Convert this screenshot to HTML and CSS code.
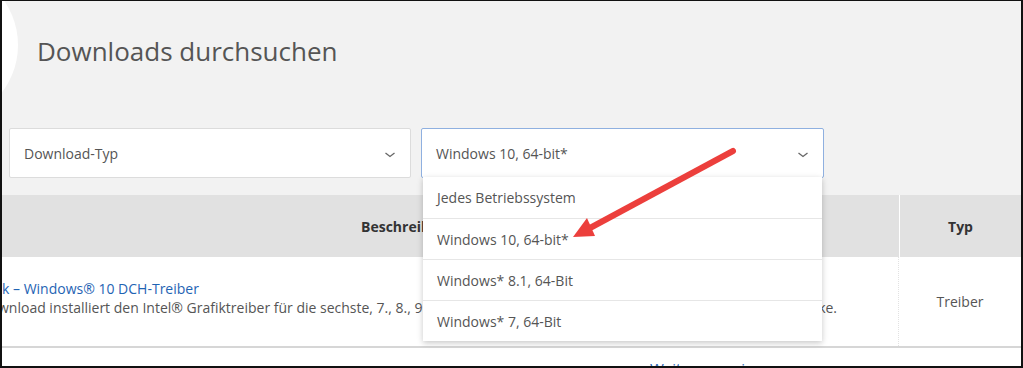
FILE: index.html
```html
<!DOCTYPE html>
<html>
  <head>
    <title>Downloads durchsuchen</title>
    <link rel="stylesheet" href="styles.css">
  </head>
  <body>
    <div class="frame">
      <div class="hero">
        <div class="bubble"></div>
        <h1>Downloads durchsuchen</h1>

        <div class="filters">
          <div class="select">
            <span>Download-Typ</span>
            <svg class="chev" width="12" height="6" viewBox="0 0 12 6"><polyline points="1.5,1 6,4.5 10.5,1" fill="none" stroke="#666" stroke-width="1.3"/></svg>
          </div>
          <div class="select open">
            <span>Windows 10, 64-bit*</span>
            <svg class="chev" width="12" height="6" viewBox="0 0 12 6"><polyline points="1.5,1 6,4.5 10.5,1" fill="none" stroke="#666" stroke-width="1.3"/></svg>
            <ul class="menu">
              <li>Jedes Betriebssystem</li>
              <li>Windows 10, 64-bit*</li>
              <li>Windows* 8.1, 64-Bit</li>
              <li>Windows* 7, 64-Bit</li>
            </ul>
          </div>
        </div>
      </div>

      <div class="table">
        <div class="thead">
          <div class="th th-desc">Beschreibung</div>
          <div class="th th-type">Typ</div>
        </div>
        <div class="row">
          <div class="td td-desc">
            <a href="#" class="title">k – Windows® 10 DCH-Treiber</a>
            <p class="desc">wnload installiert den Intel® Grafiktreiber für die sechste, 7., 8., 9. Generation Intel® Core™ Prozessoren sowie Pentium® Marke.</p>
          </div>
          <div class="td td-type">Treiber</div>
        </div>
        <div class="more"><a href="#">Weitere anzeigen</a></div>
      </div>

      <!-- red annotation arrow -->
      <svg class="arrow" width="1019" height="367" viewBox="0 0 1019 367">
        <line x1="731" y1="150" x2="588" y2="227" stroke="#ec3f3c" stroke-width="6" stroke-linecap="round"/>
        <polygon points="571,236 585,217 593,235" fill="#ec3f3c"/>
      </svg>
    </div>
  </body>
</html>
```

FILE: styles.css
```css
html,
body {
  margin: 0;
  padding: 0;
}
body {
  font-family: "Open Sans", "Noto Sans", sans-serif;
  color: #555;
}
.frame {
  position: relative;
  width: 1023px;
  height: 368px;
  box-sizing: border-box;
  border: 2px solid #111;
  border-top-width: 1px;
  overflow: hidden;
  background: #fff;
}
.hero {
  position: relative;
  background: #f2f2f2;
  height: 194px;
  box-sizing: border-box;
  padding-top: 34px;
}
.bubble {
  position: absolute;
  left: -140px;
  top: -34px;
  width: 156px;
  height: 156px;
  border-radius: 50%;
  background: #fff;
}
h1 {
  position: relative;
  margin: 0 0 61px 35px;
  font-size: 26px;
  line-height: 32px;
  font-weight: 400;
  color: #555;
}
.filters {
  display: flex;
  gap: 10px;
  padding-left: 7px;
}
.select {
  position: relative;
  display: flex;
  align-items: center;
  justify-content: space-between;
  width: 402px;
  height: 50px;
  box-sizing: border-box;
  padding: 0 14px 0 14px;
  background: #fff;
  border: 1px solid #dcdcdc;
  border-radius: 2px;
  font-size: 14px;
  color: #555;
}
.select.open {
  width: 403px;
  border-color: #8fb0e0;
}
.chev {
  margin-top: 3px;
}
.menu {
  position: absolute;
  top: 100%;
  left: 1px;
  right: 1px;
  margin: 0;
  padding: 0;
  list-style: none;
  background: #fff;
  box-shadow: 0 2px 6px rgba(0, 0, 0, 0.22);
  z-index: 2;
}
.menu li {
  height: 41px;
  box-sizing: border-box;
  padding: 0 14px;
  display: flex;
  align-items: center;
  border-top: 1px solid #e6e6e6;
  font-size: 14px;
  color: #555;
}
.menu li:first-child {
  border-top: none;
  height: 41px;
  align-items: flex-start;
  padding-top: 11px;
}
.thead {
  display: grid;
  grid-template-columns: 897px 1fr;
  column-gap: 1px;
  background: #fff;
  height: 62px;
}
.th {
  background: #e1e1e1;
  display: flex;
  align-items: center;
  font-size: 14px;
  font-weight: 700;
  color: #333;
}
.th-desc {
  padding-left: 359px;
}
.th-type {
  justify-content: center;
}
.row {
  display: grid;
  grid-template-columns: 897px 1fr;
  height: 91px;
  box-sizing: border-box;
  border-bottom: 2px solid #d6d6d6;
}
.td-desc {
  padding-top: 22px;
  border-right: 1px dotted #e2e2e2;
  overflow: hidden;
}
.title {
  display: block;
  color: #1f64b4;
  text-decoration: none;
  font-size: 14px;
  line-height: 19px;
}
.desc {
  margin: 0 0 0 -4px;
  font-size: 14px;
  line-height: 19px;
  white-space: nowrap;
  color: #555;
}
.td-type {
  display: flex;
  align-items: center;
  justify-content: center;
  font-size: 14px;
  color: #555;
}
.more {
  padding: 10px 0 0 648px;
  font-size: 15px;
  line-height: 20px;
}
.more a {
  color: #1f64b4;
  text-decoration: none;
}
.arrow {
  position: absolute;
  left: 0;
  top: 0;
  z-index: 3;
  pointer-events: none;
}
```
